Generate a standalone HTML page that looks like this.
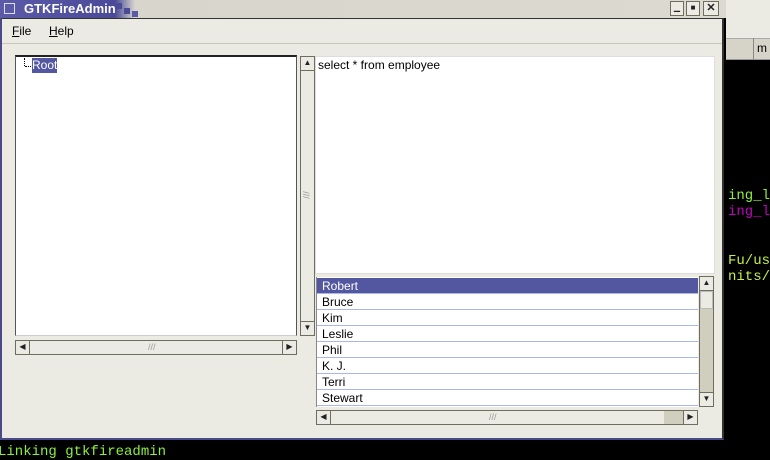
<html><head><style>
*{margin:0;padding:0;box-sizing:border-box}
body{width:770px;height:458px;background:#000;position:relative;overflow:hidden;font-family:"Liberation Sans",sans-serif;font-size:12px}
.a{position:absolute}
.sb{background:#ecebe3;border:1px solid #6f6d60}
.btn{position:absolute;background:#ecebe3;border:1px solid #6f6d60;font-size:8px;text-align:center;line-height:12px;color:#222}
.row{position:absolute;left:0;width:381px;height:16px;border-bottom:1px solid #a8b8e8;padding-left:5px;line-height:16px;color:#000}
.mono{font-family:"Liberation Mono",monospace;font-size:14px;color:#8cf03c}
</style></head><body>
<div class="a" style="left:726px;top:0;width:44px;height:38px;background:#ecebe3"></div>
<div class="a" style="left:726px;top:38px;width:44px;height:22px;background:#d6d4c8;border-top:1px solid #aaa;border-bottom:1px solid #999"></div>
<div class="a" style="left:753px;top:38px;width:1px;height:22px;background:#888"></div>
<div class="a" style="left:757px;top:41px;font-size:12px">m</div>
<div class="a mono" style="left:728px;top:188px">ing_lo</div>
<div class="a mono" style="left:728px;top:204px;color:#c000c0">ing_lo</div>
<div class="a mono" style="left:728px;top:253px;color:#c8f03c">Fu/usr</div>
<div class="a mono" style="left:728px;top:269px;color:#c8f03c">nits/l</div>
<div class="a mono" style="left:-2px;top:444px">Linking gtkfireadmin</div>
<div class="a" style="left:0;top:0;width:724px;height:440px;background:#ecebe3;border:2px solid #4a4a8a;border-top:none;border-right-color:#333"></div>
<div class="a" style="left:0;top:0;width:726px;height:18px;background:linear-gradient(90deg,#5a5aa8 0,#4a4a98 115px,#d8d6cc 135px,#dcdad0 100%)"></div>
<div class="a" style="left:116px;top:3px;width:6px;height:6px;background:#4a4a98"></div>
<div class="a" style="left:124px;top:8px;width:6px;height:6px;background:#4a4a98"></div>
<div class="a" style="left:132px;top:11px;width:6px;height:6px;background:#5a5aa8"></div>
<div class="a" style="left:4px;top:3px;width:11px;height:11px;background:#5a5aa8;border:1px solid #dde"></div>
<div class="a" style="left:24px;top:1px;color:#fff;font-weight:bold;font-size:13px">GTKFireAdmin</div>
<div class="btn" style="left:670px;top:1px;width:14px;height:15px">▁</div>
<div class="btn" style="left:686px;top:1px;width:14px;height:15px">■</div>
<div class="btn" style="left:703px;top:1px;width:16px;height:15px;font-weight:bold;font-size:11px">✕</div>
<div class="a" style="left:2px;top:18px;width:720px;height:1px;background:#333"></div>
<div class="a" style="left:12px;top:24px;font-size:12px"><u>F</u>ile</div>
<div class="a" style="left:49px;top:24px;font-size:12px"><u>H</u>elp</div>
<div class="a" style="left:2px;top:43px;width:720px;height:1px;background:#c8c6b8"></div>
<div class="a" style="left:15px;top:55px;width:282px;height:281px;background:#fff;border:1px solid #555;border-top:2px solid #222;border-bottom-color:#ccc"></div>
<div class="a" style="left:24px;top:58px;width:1px;height:8px;border-left:1px dotted #000"></div>
<div class="a" style="left:25px;top:66px;width:6px;border-top:1px dotted #000"></div>
<div class="a" style="left:32px;top:58px;width:25px;height:15px;background:#5257a0;color:#fff;line-height:15px">Root</div>
<div class="a sb" style="left:15px;top:340px;width:282px;height:15px"></div>
<div class="btn" style="left:15px;top:340px;width:15px;height:15px">◀</div>
<div class="btn" style="left:282px;top:340px;width:15px;height:15px">▶</div>
<div class="a" style="left:148px;top:342px;font-size:9px;color:#999">///</div>
<div class="a sb" style="left:300px;top:56px;width:15px;height:280px"></div>
<div class="btn" style="left:300px;top:56px;width:15px;height:15px">▲</div>
<div class="btn" style="left:300px;top:321px;width:15px;height:15px">▼</div>
<div class="a" style="left:302px;top:190px;font-size:9px;color:#999;transform:rotate(90deg)">///</div>
<div class="a" style="left:315px;top:56px;width:400px;height:218px;background:#fff;border:1px solid #ddd"></div>
<div class="a" style="left:318px;top:58px">select * from employee</div>
<div class="a" style="left:316px;top:277px;width:382px;height:130px;background:#fff;border-left:1px solid #888;overflow:hidden">
<div class="row" style="top:1px;background:#5257a0;color:#fff">Robert</div>
<div class="row" style="top:17px">Bruce</div>
<div class="row" style="top:33px">Kim</div>
<div class="row" style="top:49px">Leslie</div>
<div class="row" style="top:65px">Phil</div>
<div class="row" style="top:81px">K. J.</div>
<div class="row" style="top:97px">Terri</div>
<div class="row" style="top:113px">Stewart</div>
</div>
<div class="a sb" style="left:699px;top:276px;width:15px;height:131px;background:#d0cebc"></div>
<div class="btn" style="left:699px;top:276px;width:15px;height:15px">▲</div>
<div class="a" style="left:700px;top:291px;width:13px;height:18px;background:#ecebe3;border:1px solid #bbb"></div>
<div class="btn" style="left:699px;top:392px;width:15px;height:15px">▼</div>
<div class="a sb" style="left:316px;top:410px;width:382px;height:15px;background:#d0cebc"></div>
<div class="a" style="left:331px;top:411px;width:333px;height:13px;background:#ecebe3"></div>
<div class="btn" style="left:316px;top:410px;width:15px;height:15px">◀</div>
<div class="btn" style="left:683px;top:410px;width:15px;height:15px">▶</div>
<div class="a" style="left:489px;top:412px;font-size:9px;color:#999">///</div>
</body></html>
